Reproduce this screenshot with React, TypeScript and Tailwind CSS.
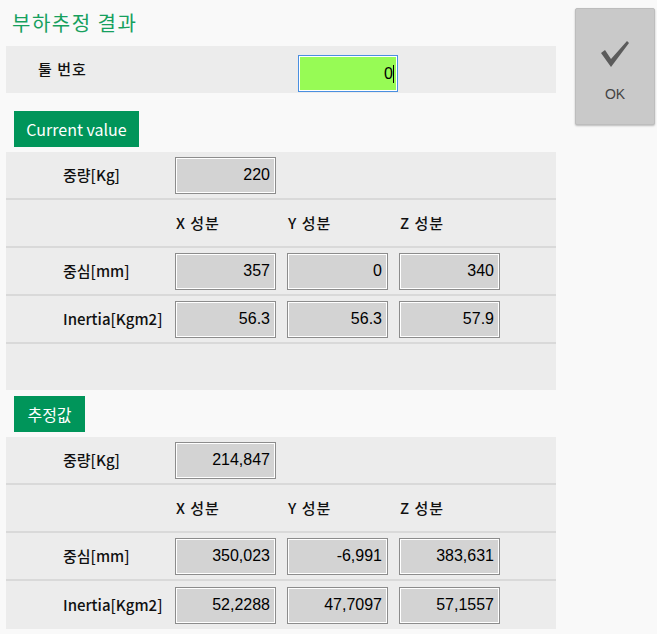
import React from "react";

const ko = { fontFamily: '"Noto Sans CJK KR", "Noto Sans", sans-serif' };
const num = { fontFamily: '"Liberation Sans", Arial, sans-serif' };

function ValueBox({ value }: { value: string }) {
	return (
		<div
			className="w-[101px] h-[37px] flex items-center justify-end pr-[5px] bg-[#d3d3d3] border border-[#8c8c8c] shadow-[inset_1px_1px_0_#ffffff,inset_-1px_-1px_0_#ffffff] text-[16px] text-black"
			style={num}
		>
			{value}
		</div>
	);
}

function Row({
	label,
	values,
	last,
}: {
	label?: string;
	values?: string[];
	last?: boolean;
}) {
	return (
		<div
			className={`flex items-center h-[48px] ${
				last ? "" : "border-b-2 border-[#d9d9d9]"
			}`}
		>
			<div
				className="w-[169px] pl-[57px] text-[15px] font-medium text-[#111]"
				style={ko}
			>
				{label}
			</div>
			<div className="flex gap-[11px]">
				{values?.map((v, i) => (
					<ValueBox key={i} value={v} />
				))}
			</div>
		</div>
	);
}

function HeaderRow() {
	return (
		<div className="flex items-center h-[48px] border-b-2 border-[#d9d9d9]">
			<div className="w-[170px]" />
			<div
				className="flex gap-[11px] text-[15px] tracking-[1px] font-medium text-[#111]"
				style={ko}
			>
				<div className="w-[101px]">X 성분</div>
				<div className="w-[101px]">Y 성분</div>
				<div className="w-[101px]">Z 성분</div>
			</div>
		</div>
	);
}

function Tab({ title, width }: { title: string; width: string }) {
	return (
		<div
			className={`${width} h-[36px] ml-[8px] flex items-center justify-center bg-[#00955a] text-white text-[16px]`}
			style={ko}
		>
			{title}
		</div>
	);
}

export default function App() {
	return (
		<div className="w-[657px] h-[634px] bg-[#f9f9f9] flex overflow-hidden">
			<div className="w-[550px] ml-[6px] flex flex-col">
				<div
					className="h-[46px] pl-[6px] flex items-center text-[20px] tracking-[1.5px] text-[#16a05e]"
					style={ko}
				>
					부하추정 결과
				</div>

				<div className="h-[47px] bg-[#ececec] flex items-center">
					<div
						className="w-[292px] pl-[32px] text-[15px] tracking-[1px] font-medium text-[#111]"
						style={ko}
					>
						툴 번호
					</div>
					<div
						className="w-[100px] h-[37px] mt-[8px] flex items-center justify-end pr-[3px] bg-[#97fb55] border border-[#4a8fe0] shadow-[inset_1px_1px_0_#ffffff,inset_-1px_-1px_0_#ffffff] text-[16px] text-black"
						style={num}
					>
						0<span className="w-px h-[18px] bg-black" />
					</div>
				</div>

				<div className="mt-[18px]">
					<Tab title="Current value" width="w-[125px]" />
				</div>
				<div className="mt-[5px] bg-[#ececec]">
					<Row label="중량[Kg]" values={["220"]} />
					<HeaderRow />
					<Row label="중심[mm]" values={["357", "0", "340"]} />
					<Row label="Inertia[Kgm2]" values={["56.3", "56.3", "57.9"]} />
					<div className="h-[46px]" />
				</div>

				<div className="mt-[6px]">
					<Tab title="추정값" width="w-[71px]" />
				</div>
				<div className="mt-[5px] bg-[#ececec]">
					<Row label="중량[Kg]" values={["214,847"]} />
					<HeaderRow />
					<Row
						label="중심[mm]"
						values={["350,023", "-6,991", "383,631"]}
					/>
					<Row
						label="Inertia[Kgm2]"
						values={["52,2288", "47,7097", "57,1557"]}
						last
					/>
				</div>
			</div>

			<div className="ml-[19px] mt-[8px]">
				<div className="w-[80px] h-[117px] rounded-[2px] bg-[#c9c9c9] border border-[#bdbdbd] shadow-[0_1px_2px_rgba(0,0,0,0.25)] flex flex-col items-center">
					<svg
						width="30"
						height="30"
						viewBox="0 0 30 30"
						className="mt-[31px]"
					>
						<polygon
							points="1,13 5,10 11,19 27,1 29,3 11,27"
							fill="#5b5b5b"
						/>
					</svg>
					<div className="mt-[14px] text-[14px] text-[#444]" style={num}>
						OK
					</div>
				</div>
			</div>
		</div>
	);
}
